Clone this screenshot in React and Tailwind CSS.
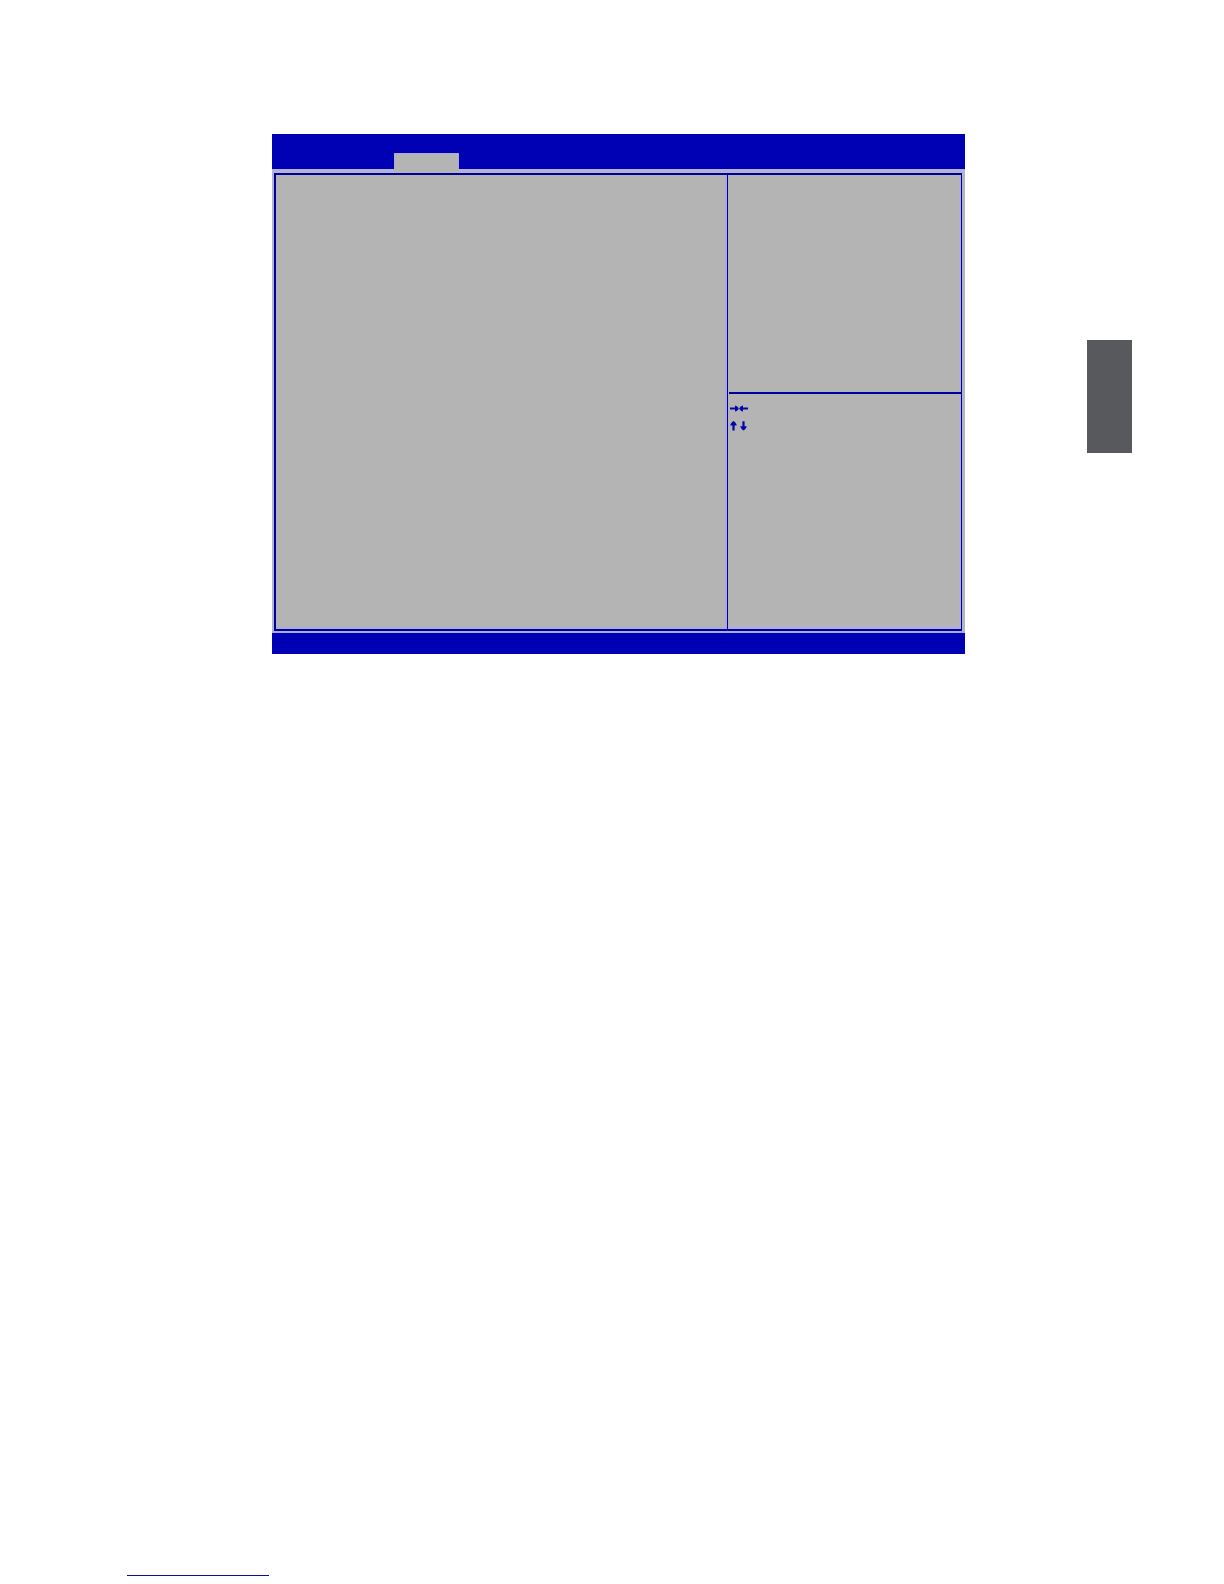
function HorizontalArrows() {
  return (
    <svg width="18" height="8" viewBox="0 0 18 8" fill="#0606a8" aria-hidden="true">
      <path d="M0 2.6h5V.4c1.8.5 3 1.4 3.800 3.100-.8 1.700-2 2.600-3.800 3.100V4.400H0z" />
      <path d="M18 2.600h-5V.4c-1.800.5-3 1.400-3.800 3.100.8 1.700 2 2.600 3.800 3.100V4.400h5z" />
    </svg>
  );
}

function VerticalArrows() {
  return (
    <svg width="18" height="10" viewBox="0 0 18 10" fill="#0606a8" aria-hidden="true">
      <path d="M3.500 0C5 1 6.300 2.500 6.800 4.400H4.600V9.400H2.400V4.400H.2C.7 2.500 2 1 3.500 0z" />
      <path d="M13.500 9.600c-1.500-1-2.800-2.500-3.300-4.400h2.200V.2h2.200v5h2.200c-.5 1.900-1.800 3.400-3.300 4.400z" />
    </svg>
  );
}

function SetupScreen() {
  return (
    <section className="min-w-0 bg-[#b4b4b4]">
      {/* Title bar with the selected tab */}
      <header className="flex h-[35px] items-end bg-[#0000b4] pl-[122px]">
        <div className="h-4 w-[65px] border-x border-t border-[#aaaad2] bg-[#b4b4b4]" />
      </header>

      {/* Gutter above the frame, open under the tab */}
      <div className="flex h-1">
        <div className="w-[122px] bg-[#b3b3d6]" />
        <div className="w-[65px] bg-[#b4b4b4]" />
        <div className="flex-1 bg-[#b3b3d6]" />
      </div>

      {/* Frame */}
      <div className="border-b-2 border-l-2 border-r-3 border-b-[#aaaaf0] border-l-[#b3b3d0] border-r-[#b4b4c4]">
        <div className="flex h-[458px] border-y-2 border-l-2 border-r border-y-[#000096] border-x-[#0000a0]">
          <main className="flex-1 border-b-2 border-r-2 border-[#aaaade]" />

          <aside className="flex w-[234px] flex-col border-l border-[#0000a0]">
            <div className="h-[217px] border-r border-[#aaaaf0]" />
            <div className="ml-px h-[2px] bg-[#0000a0]" />
            <div className="flex flex-1 flex-col gap-2 border-b-2 border-r border-[#aaaaf0] pl-[2px] pt-[11px]">
              <HorizontalArrows />
              <VerticalArrows />
            </div>
          </aside>
        </div>
      </div>

      {/* Bottom bar */}
      <footer className="h-[21px] bg-[#0000b4]" />
    </section>
  );
}

export default function App() {
  return (
    <div className="flex min-h-screen flex-col bg-white pb-2">
      <div className="flex items-start pl-[272px] pr-[92px] pt-[134px]">
        <div className="min-w-0 flex-1">
          <SetupScreen />
        </div>

        {/* Chapter marker on the page edge */}
        <div className="ml-[122px] mt-[206px] h-[113px] w-[45px] bg-[#58595c]" />
      </div>

      {/* Rule at the foot of the page */}
      <hr className="ml-[127px] mt-auto h-px w-[142px] border-0 bg-[#0c0ca0]" />
    </div>
  );
}
